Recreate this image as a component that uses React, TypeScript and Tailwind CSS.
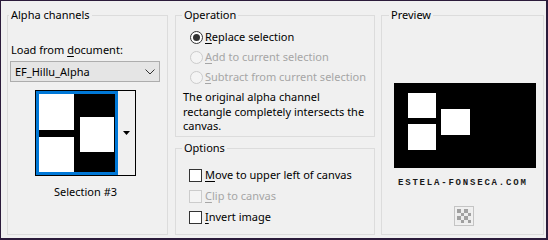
import type { ReactNode } from "react";

/* small Windows-style helpers */
function Radio({ checked, disabled, children }: { checked?: boolean; disabled?: boolean; children: ReactNode }) {
  return (
    <div className={`flex items-center h-[16px] gap-[2px] whitespace-nowrap ${disabled ? "text-[#a6a6a6]" : "text-black"}`}>
      <span
        className={`shrink-0 w-[13px] h-[13px] rounded-full border flex items-center justify-center ${
          disabled ? "border-[#cccccc] bg-[#f4f4f4]" : "border-[#333333] bg-white"
        }`}
      >
        {checked && <span className="w-[7px] h-[7px] rounded-full bg-[#333333]" />}
      </span>
      <span>{children}</span>
    </div>
  );
}

function Check({ disabled, children }: { disabled?: boolean; children: ReactNode }) {
  return (
    <div className={`flex items-center h-[16px] gap-[3px] whitespace-nowrap ${disabled ? "text-[#a6a6a6]" : "text-black"}`}>
      <span
        className={`shrink-0 w-[13px] h-[13px] border ${
          disabled ? "border-[#cccccc] bg-[#f4f4f4]" : "border-[#333333] bg-white"
        }`}
      />
      <span>{children}</span>
    </div>
  );
}

const U = ({ children }: { children: ReactNode }) => <span className="underline underline-offset-[2px]">{children}</span>;

export default function App() {
  return (
    <div className="w-[548px] h-[240px] border-l border-t border-r-2 border-b-2 border-[#2b1b3b] bg-[#f0f0f0] font-['Noto_Sans',sans-serif] text-[11px] leading-[16px] text-black flex pl-[6px] pt-[6px]">
      {/* Alpha channels */}
      <fieldset className="w-[161px] h-[228px] border border-[#dcdcdc] p-0">
        <legend className="ml-[1px] px-[2px]">Alpha channels</legend>
        <div className="px-[2px]">
          <div className="mt-[19px] ml-[1px]">
            Load from <U>d</U>ocument:
          </div>
          <div className="mt-[3px] w-[150px] h-[21px] border border-[#adadad] bg-[#e5e5e5] flex items-center justify-between pl-[4px] pr-[4px]">
            <span>EF_Hillu_Alpha</span>
            <svg width="10" height="6" viewBox="0 0 10 6">
              <polyline points="0.5,0.5 5,5 9.5,0.5" fill="none" stroke="#333" strokeWidth="1" />
            </svg>
          </div>
          <div className="mt-[8px] ml-[25px] w-[101px]">
            <div className="h-[86px] border border-black flex">
              <div className="w-[82px] h-full border-[3px] border-[#0078d7]">
                <svg width="76" height="78" viewBox="0 0 76 78" className="block">
                  <rect width="76" height="78" fill="#000" />
                  <rect x="0" y="0" width="35" height="36" fill="#fff" />
                  <rect x="0" y="43" width="35" height="35" fill="#fff" />
                  <rect x="41" y="23" width="34" height="35" fill="#fff" />
                </svg>
              </div>
              <div className="flex-1 flex items-center justify-center">
                <svg width="7" height="4" viewBox="0 0 7 4">
                  <polygon points="0,0 7,0 3.5,4" fill="#000" />
                </svg>
              </div>
            </div>
            <div className="mt-[8px] text-center">Selection #3</div>
          </div>
        </div>
      </fieldset>

      {/* Operation / Options */}
      <div className="ml-[7px] w-[200px] flex flex-col gap-[3px]">
        <fieldset className="h-[130px] border border-[#dcdcdc] p-0">
          <legend className="ml-[6px] px-[2px]">Operation</legend>
          <div className="pl-[7px]">
            <div className="mt-[6px] ml-[7px] flex flex-col gap-[4px]">
              <Radio checked>
                <U>R</U>eplace selection
              </Radio>
              <Radio disabled>
                <U>A</U>dd to current selection
              </Radio>
              <Radio disabled>
                <U>S</U>ubtract from current selection
              </Radio>
            </div>
            <p className="mt-[5px] leading-[14.5px] whitespace-nowrap">
              The original alpha channel
              <br />
              rectangle completely intersects the
              <br />
              canvas.
            </p>
          </div>
        </fieldset>
        <fieldset className="h-[95px] border border-[#dcdcdc] p-0">
          <legend className="ml-[6px] px-[2px]">Options</legend>
          <div className="mt-[11px] ml-[13px] flex flex-col gap-[5px]">
            <Check>
              <U>M</U>ove to upper left of canvas
            </Check>
            <Check disabled>
              <U>C</U>lip to canvas
            </Check>
            <Check>
              <U>I</U>nvert image
            </Check>
          </div>
        </fieldset>
      </div>

      {/* Preview */}
      <fieldset className="ml-[6px] w-[163px] h-[228px] border border-[#dcdcdc] p-0">
        <legend className="ml-[7px] px-[2px]">Preview</legend>
        <div className="flex flex-col items-start">
          <svg width="142" height="85" viewBox="0 0 142 85" className="block mt-[60px] ml-[12px]">
            <rect width="142" height="85" fill="#000" />
            <rect x="14" y="10" width="28" height="25" fill="#fff" />
            <rect x="14" y="41" width="28" height="26" fill="#fff" />
            <rect x="47" y="26" width="29" height="26" fill="#fff" />
          </svg>
          <div className="mt-[10px] ml-[16px] font-['Liberation_Mono',monospace] font-bold text-[9px] leading-[10px] tracking-[1.8px] text-[#1a1a1a]">
            ESTELA-FONSECA.COM
          </div>
          <div className="mt-[18px] ml-[72px] w-[20px] h-[20px] border border-[#c4c4c4] flex items-center justify-center">
            <svg width="14" height="14" viewBox="0 0 4 4" shapeRendering="crispEdges">
              <rect width="4" height="4" fill="#ececec" />
              <rect x="0" y="0" width="1" height="1" fill="#a0a0a0" />
              <rect x="2" y="0" width="1" height="1" fill="#a0a0a0" />
              <rect x="1" y="1" width="1" height="1" fill="#a0a0a0" />
              <rect x="3" y="1" width="1" height="1" fill="#a0a0a0" />
              <rect x="0" y="2" width="1" height="1" fill="#a0a0a0" />
              <rect x="2" y="2" width="1" height="1" fill="#a0a0a0" />
              <rect x="1" y="3" width="1" height="1" fill="#a0a0a0" />
              <rect x="3" y="3" width="1" height="1" fill="#a0a0a0" />
            </svg>
          </div>
        </div>
      </fieldset>
    </div>
  );
}
